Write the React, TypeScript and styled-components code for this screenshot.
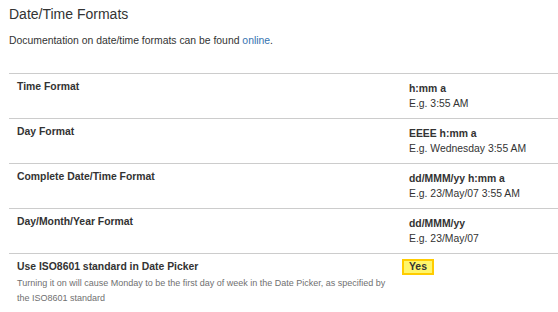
import styled, { createGlobalStyle } from "styled-components";

const GlobalStyle = createGlobalStyle`
  html, body {
    margin: 0;
    padding: 0;
    background: #fff;
  }
  body {
    font-family: "Liberation Sans", Arial, sans-serif;
    color: #333;
  }
`;

const Page = styled.div`
  padding: 6px 0 0 9px;
  width: 558px;
  box-sizing: border-box;
  overflow: hidden;
`;

const Title = styled.h2`
  margin: 0;
  font-size: 14px;
  font-weight: normal;
  line-height: 16px;
  color: #333;
`;

const Intro = styled.p`
  margin: 11px 0 0;
  font-size: 10.4px;
  line-height: 15px;
`;

const Link = styled.a`
  color: #3572b0;
  text-decoration: none;
`;

const Table = styled.div`
  margin-top: 25px;
  display: grid;
  grid-template-columns: 393px 1fr;
`;

const Row = styled.div`
  display: contents;
`;

const LabelCell = styled.div<{ $last?: boolean }>`
  border-top: 1px solid #ccc;
  padding: 5px 8px ${(p) => (p.$last ? "8px" : "7px")};
  font-size: 10.4px;
  line-height: 15px;
`;

const ValueCell = styled.div<{ $badge?: boolean }>`
  border-top: 1px solid #ccc;
  padding: ${(p) => (p.$badge ? "5px 0 0 0" : "7px 0 7px 7px")};
  font-size: 10.4px;
  line-height: 15px;
`;

const Label = styled.div`
  font-weight: bold;
`;

const Description = styled.div`
  margin-top: 2px;
  font-size: 9px;
  line-height: 15px;
  color: #707070;
`;

const Pattern = styled.div`
  font-weight: bold;
`;

const Example = styled.div``;

const Badge = styled.span`
  display: inline-block;
  box-sizing: border-box;
  height: 16px;
  padding: 0 5px;
  border: 2px solid #ffcc00;
  background: #fff66b;
  font-weight: bold;
  font-size: 10.4px;
  line-height: 12px;
  color: #333;
`;

const formats = [
  { label: "Time Format", pattern: "h:mm a", example: "E.g. 3:55 AM" },
  { label: "Day Format", pattern: "EEEE h:mm a", example: "E.g. Wednesday 3:55 AM" },
  {
    label: "Complete Date/Time Format",
    pattern: "dd/MMM/yy h:mm a",
    example: "E.g. 23/May/07 3:55 AM",
  },
  { label: "Day/Month/Year Format", pattern: "dd/MMM/yy", example: "E.g. 23/May/07" },
];

export default function App() {
  return (
    <>
      <GlobalStyle />
      <Page>
        <Title>Date/Time Formats</Title>
        <Intro>
          Documentation on date/time formats can be found <Link href="#">online</Link>.
        </Intro>
        <Table>
          {formats.map((f) => (
            <Row key={f.label}>
              <LabelCell>
                <Label>{f.label}</Label>
              </LabelCell>
              <ValueCell>
                <Pattern>{f.pattern}</Pattern>
                <Example>{f.example}</Example>
              </ValueCell>
            </Row>
          ))}
          <Row>
            <LabelCell $last>
              <Label>Use ISO8601 standard in Date Picker</Label>
              <Description>
                Turning it on will cause Monday to be the first day of week in the Date
                Picker, as specified by the ISO8601 standard
              </Description>
            </LabelCell>
            <ValueCell $badge>
              <Badge>Yes</Badge>
            </ValueCell>
          </Row>
        </Table>
      </Page>
    </>
  );
}
